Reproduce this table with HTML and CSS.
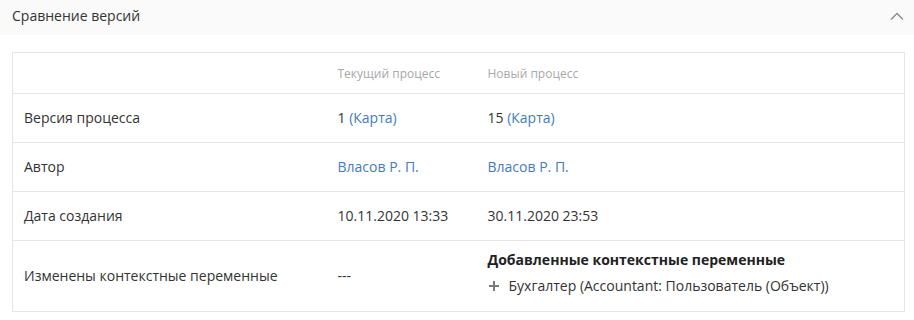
FILE: index.html
```html
<!DOCTYPE html>
<html lang="ru">
<head>
<meta charset="utf-8">
<link rel="stylesheet" href="styles.css">
</head>
<body>
<div class="panel">
  <div class="panel-head">
    <span class="panel-title">Сравнение версий</span>
    <svg class="chevron" width="14" height="8" viewBox="0 0 14 8"><path d="M1 7.5 L7 1.5 L13 7.5" fill="none" stroke="#8a8a8a" stroke-width="1.3"/></svg>
  </div>
  <div class="panel-body">
    <table class="cmp">
      <colgroup><col class="c1"><col class="c2"><col class="c3"></colgroup>
      <thead>
        <tr><th></th><th>Текущий процесс</th><th>Новый процесс</th></tr>
      </thead>
      <tbody>
        <tr><td>Версия процесса</td><td>1 <a class="lnk">(Карта)</a></td><td>15 <a class="lnk">(Карта)</a></td></tr>
        <tr><td>Автор</td><td><a class="lnk">Власов Р. П.</a></td><td><a class="lnk">Власов Р. П.</a></td></tr>
        <tr><td>Дата создания</td><td>10.11.2020 13:33</td><td>30.11.2020 23:53</td></tr>
        <tr class="last"><td>Изменены контекстные переменные</td><td>---</td><td>
          <div class="added-title">Добавленные контекстные переменные</div>
          <div class="added-item"><svg class="plus" width="10" height="10" viewBox="0 0 10 10"><path d="M5 0V10M0 5H10" stroke="#7a7a7a" stroke-width="2"/></svg><span>Бухгалтер (Accountant: Пользователь (Объект))</span></div>
        </td></tr>
      </tbody>
    </table>
  </div>
</div>
</body>
</html>
```
FILE: styles.css
```css
* { box-sizing: border-box; }
html, body { margin: 0; padding: 0; background: #fff; }
body { font-family: "Open Sans", "Noto Sans", sans-serif; font-size: 14px; color: #333; }
.panel-head {
  height: 35px;
  background: #fafafa;
  display: flex;
  align-items: center;
  justify-content: space-between;
  padding: 0 10px 0 12px;
}
.panel-title { font-size: 14px; color: #333; position: relative; top: -2px; }
.chevron { position: relative; top: -2px; }
.panel-body { padding: 17px 9px 9px 12px; }
.cmp {
  width: 100%;
  border-collapse: collapse;
  border: 1px solid #e6e6e6;
  table-layout: fixed;
}
.c1 { width: 314px; }
.c2 { width: 150px; }
.cmp th {
  height: 41px;
  font-size: 12px;
  font-weight: normal;
  color: #a8a8a8;
  text-align: left;
  padding: 0 11px;
  vertical-align: middle;
}
.cmp td {
  border-top: 1px solid #e6e6e6;
  height: 49px;
  padding: 0 11px;
  vertical-align: middle;
  line-height: 18px;
}
.cmp tr.last td { height: 71px; padding-top: 0; padding-bottom: 6px; }
.cmp tr.last td:first-child, .cmp tr.last td:nth-child(2) { padding-bottom: 0; }
.lnk { color: #3f7cc0; text-decoration: none; }
.added-title { font-weight: bold; color: #222; margin-bottom: 8px; }
.added-item { display: flex; align-items: center; gap: 10px; padding-left: 1px; }
```
